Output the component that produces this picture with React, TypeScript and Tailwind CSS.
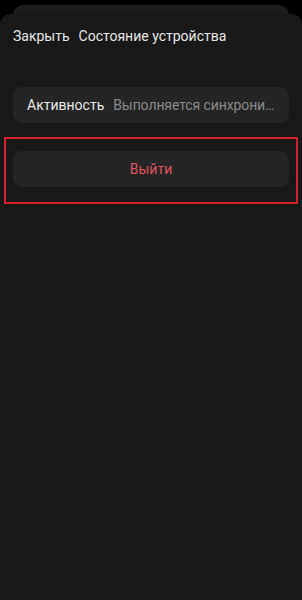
export default function App() {
  return (
    <div className="h-[600px] w-[302px] overflow-hidden bg-black font-['Roboto',sans-serif] antialiased">
      <div className="mx-[13px] mt-[5px] h-[12px] rounded-t-[10px] bg-[#1c1c1c]" />
      <div className="-mt-[3px] flex h-[589px] flex-col rounded-t-[10px] bg-[#191919]">
        <div className="mt-[12px] flex h-[20px] items-center gap-[9px] px-[13px] text-[14px] text-[#e6e6e6]">
          <span>Закрыть</span>
          <span>Состояние устройства</span>
        </div>
        <div className="mx-[13px] mt-[41px] flex h-[36px] items-center gap-[9px] rounded-[9px] bg-[#252525] pl-[14px] pr-[11px] text-[14px]">
          <span className="shrink-0 text-[#e6e6e6]">Активность</span>
          <span className="min-w-0 truncate tracking-[-0.1px] text-[#8a8a8a]">Выполняется синхронизация</span>
        </div>
        <div className="mx-[4px] mt-[14px] border-2 border-[#d0242c] px-[7px] pt-[12px] pb-[15px]">
          <button className="flex h-[36px] w-full items-center justify-center rounded-[9px] bg-[#252525] text-[14px] text-[#dc5660]">
            Выйти
          </button>
        </div>
      </div>
    </div>
  );
}
